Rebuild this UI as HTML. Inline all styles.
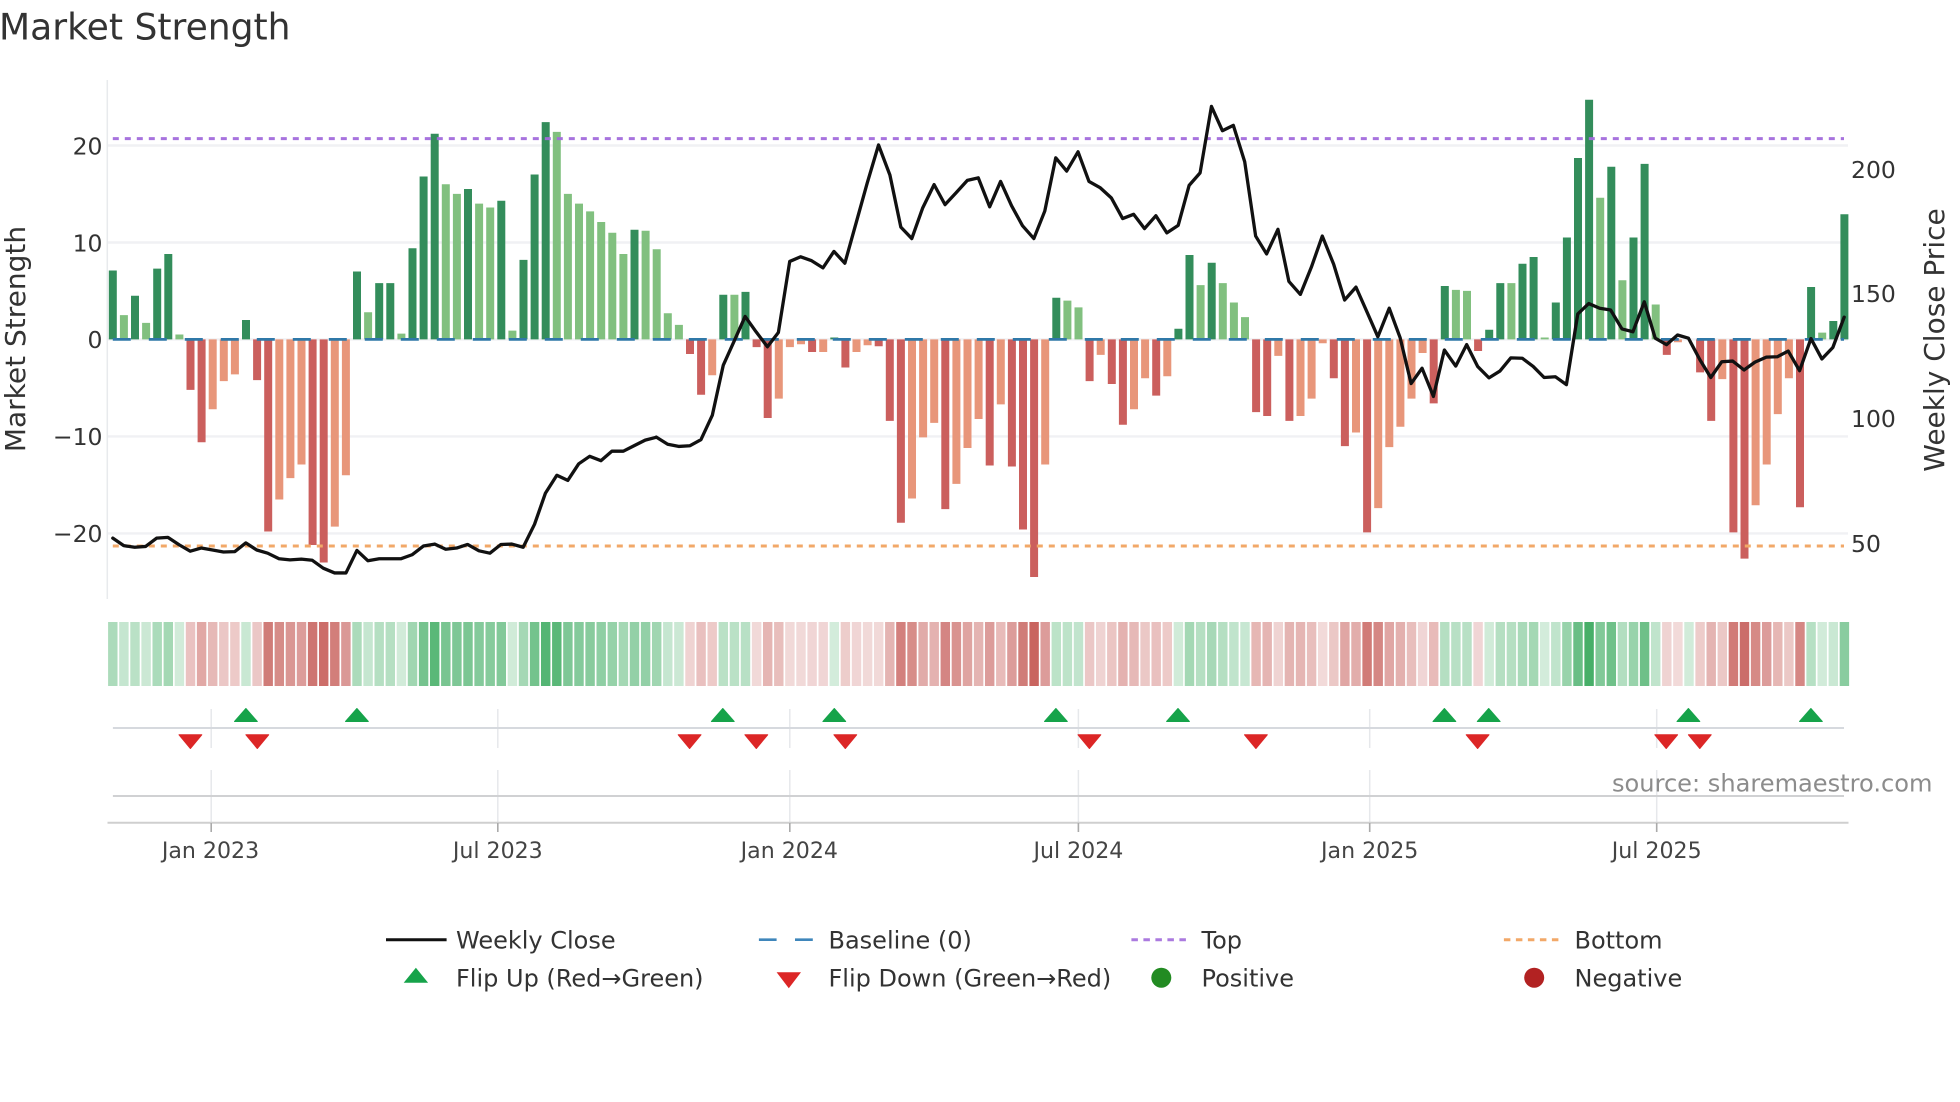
<!DOCTYPE html>
<html lang="en">
<head>
<meta charset="utf-8">
<title>Market Strength</title>
<style>
html,body{margin:0;padding:0;background:#fff;width:1960px;height:1102px;overflow:hidden}
svg{display:block}
text{font-family:"DejaVu Sans","Liberation Sans",sans-serif}
.t{font-size:23.5px;fill:#333}
.d{font-size:22.1px;fill:#444;text-anchor:middle}
.l{font-size:24px;fill:#333}
.ln{fill:none;stroke:#111;stroke-width:3.3;stroke-linejoin:round;stroke-linecap:round;vector-effect:non-scaling-stroke}
</style>
</head>
<body>
<svg width="1960" height="1102" viewBox="0 0 1960 1102" xmlns="http://www.w3.org/2000/svg">
<rect width="1960" height="1102" fill="#fff"/>

<text x="-1" y="39.5" font-size="36.1" fill="#333">Market Strength</text>

<!-- gridlines -->
<g stroke="#f0f1f4" stroke-width="2.4" fill="none">
<path d="M107 145.5H1848M107 242.5H1848M107 339.4H1848M107 436.4H1848M107 533.4H1848"/>
</g>
<path d="M107.3 80V599" stroke="#e8eaed" stroke-width="1.5"/>

<!-- bars -->
<g transform="translate(112.8,339.4) scale(11.1,-9.7)" fill="none" stroke-width=".72">
<path stroke="#338d5b" d="M0 0V7.1M2 0V4.5M4 0V7.3M5 0V8.8M12 0V2M22 0V7M24 0V5.8M25 0V5.8M27 0V9.4M28 0V16.8M29 0V21.2M32 0V15.5M35 0V14.3M37 0V8.2M38 0V17M39 0V22.4M47 0V11.3M55 0V4.6M57 0V4.9M65 0V.2M85 0V4.3M96 0V1.1M97 0V8.7M99 0V7.9M120 0V5.5M124 0V1M125 0V5.8M127 0V7.8M128 0V8.5M130 0V3.8M131 0V10.5M132 0V18.7M133 0V24.7M135 0V17.8M137 0V10.5M138 0V18.1M153 0V5.4M155 0V1.9M156 0V12.9"/>
<path stroke="#81c07f" d="M1 0V2.5M3 0V1.7M6 0V.5M23 0V2.8M26 0V.6M30 0V16M31 0V15M33 0V14M34 0V13.6M36 0V.9M40 0V21.4M41 0V15M42 0V14M43 0V13.2M44 0V12.1M45 0V11M46 0V8.8M48 0V11.2M49 0V9.3M50 0V2.7M51 0V1.5M56 0V4.6M86 0V4M87 0V3.3M98 0V5.6M100 0V5.8M101 0V3.8M102 0V2.3M121 0V5.1M122 0V5M126 0V5.8M129 0V.2M134 0V14.6M136 0V6.1M139 0V3.6M154 0V.7"/>
<path stroke="#cb5f5d" d="M7 0V-5.2M8 0V-10.6M13 0V-4.2M14 0V-19.8M18 0V-21.2M19 0V-23M52 0V-1.5M53 0V-5.7M58 0V-.8M59 0V-8.1M63 0V-1.3M66 0V-2.9M69 0V-.7M70 0V-8.4M71 0V-18.9M75 0V-17.5M79 0V-13M81 0V-13.1M82 0V-19.6M83 0V-24.5M88 0V-4.3M90 0V-4.6M91 0V-8.8M94 0V-5.8M103 0V-7.5M104 0V-7.9M106 0V-8.4M110 0V-4M111 0V-11M113 0V-19.9M119 0V-6.6M123 0V-1.2M140 0V-1.6M143 0V-3.4M144 0V-8.4M146 0V-19.9M147 0V-22.6M152 0V-17.3"/>
<path stroke="#e8967a" d="M9 0V-7.2M10 0V-4.3M11 0V-3.6M15 0V-16.5M16 0V-14.3M17 0V-12.9M20 0V-19.3M21 0V-14M54 0V-3.7M60 0V-6.1M61 0V-.8M62 0V-.5M64 0V-1.3M67 0V-1.3M68 0V-.6M72 0V-16.4M73 0V-10.1M74 0V-8.6M76 0V-14.9M77 0V-11.2M78 0V-8.2M80 0V-6.7M84 0V-12.9M89 0V-1.6M92 0V-7.2M93 0V-4M95 0V-3.8M105 0V-1.7M107 0V-7.9M108 0V-6.1M109 0V-.4M112 0V-9.6M114 0V-17.4M115 0V-11.1M116 0V-9M117 0V-6.1M118 0V-1.4M141 0V-.3M145 0V-4.1M148 0V-17.1M149 0V-12.9M150 0V-7.7M151 0V-4"/>
</g>

<!-- baseline / top / bottom -->
<path d="M112.8 339.4H1844" stroke="#2f78a8" stroke-width="2.8" stroke-dasharray="18 18" fill="none"/>
<path d="M112.8 138.6H1844" stroke="#a26bdc" stroke-width="3" stroke-dasharray="6 6" fill="none" opacity=".95"/>
<path d="M112.8 546H1844" stroke="#f2a868" stroke-width="3" stroke-dasharray="6 6" fill="none"/>

<!-- weekly close line -->
<polyline class="ln" transform="scale(.42088,.39541)" points="268,1361 294,1380 320,1384 346,1382 372,1361 399,1359 426,1378 452,1394 478,1386 505,1391 531,1396 558,1395 584,1373 610,1391 636,1399 663,1413 689,1416 716,1414 742,1417 768,1437 795,1449 822,1449 848,1392 874,1418 901,1413 927,1413 953,1413 979,1403 1006,1381 1033,1376 1059,1389 1085,1386 1111,1377 1138,1393 1164,1399 1190,1377 1216,1376 1243,1384 1270,1326 1296,1247 1323,1202 1349,1215 1375,1173 1401,1154 1428,1165 1454,1141 1481,1141 1507,1127 1533,1113 1559,1106"/>
<polyline class="ln" transform="translate(650,60) scale(.42088,.35714)" points="15,1056 42,1076 68,1082 95,1080 121,1063 148,995 174,855 200,787 226,718 252,761 279,803 305,763 332,564 358,551 384,562 411,582 437,536 463,569 490,455 516,345 543,238 570,322 596,468 622,500 648,414 675,349 701,405 727,372 754,337 780,330 807,411 833,340 859,408 885,464 912,500 938,423 964,274 990,311 1017,257 1043,340 1070,358 1096,386 1123,444 1149,432 1175,472 1202,436 1228,484 1255,463 1281,351 1307,316 1334,130 1360,198 1386,183 1413,285 1439,493 1465,543 1492,474 1518,620 1545,656"/>
<polyline class="ln" transform="translate(1300,60) scale(.42088,.35714)" points="1,656 27,580 53,493 80,572 106,672 133,636 159,705 185,775 212,695 238,778 264,906 290,863 317,942 343,812 370,857 396,797 422,858 449,890 475,871 501,834 528,835 554,858 580,889 607,887 633,909 660,711 686,682 712,695 738,700 765,753 791,761 818,677 844,779 871,797 897,770 923,779 950,839 976,889 1002,845 1028,843 1055,868 1081,846 1108,832 1134,831 1160,815 1187,870 1214,780 1240,837 1266,805 1293,720"/>

<!-- y ticks -->
<g text-anchor="end">
<text class="t" x="102.5" y="154.5">20</text>
<text class="t" x="102.5" y="251.5">10</text>
<text class="t" x="102.5" y="348">0</text>
<text class="t" x="102.5" y="445">−10</text>
<text class="t" x="102.5" y="542">−20</text>
</g>
<text class="t" x="1851" y="178">200</text>
<text class="t" x="1851" y="302">150</text>
<text class="t" x="1851" y="427">100</text>
<text class="t" x="1851" y="552">50</text>
<text transform="translate(25,339) rotate(-90)" text-anchor="middle" font-size="28" fill="#333">Market Strength</text>
<text transform="translate(1944,340) rotate(-90)" text-anchor="middle" font-size="28" fill="#333">Weekly Close Price</text>

<!-- heat strip -->
<g transform="translate(112.8,0) scale(11.1,1)" fill="none" stroke-width=".85" opacity=".87">
<g stroke="#23a04b">
<path d="M0 622v64" opacity=".43"/><path d="M1 622v64" opacity=".30"/><path d="M2 622v64" opacity=".36"/><path d="M3 622v64" opacity=".27"/><path d="M4 622v64" opacity=".44"/><path d="M5 622v64" opacity=".48"/><path d="M6 622v64" opacity=".24"/><path d="M12 622v64" opacity=".28"/><path d="M22 622v64" opacity=".43"/><path d="M23 622v64" opacity=".30"/><path d="M24 622v64" opacity=".39"/><path d="M25 622v64" opacity=".39"/><path d="M26 622v64" opacity=".24"/><path d="M27 622v64" opacity=".50"/><path d="M28 622v64" opacity=".72"/><path d="M29 622v64" opacity=".86"/><path d="M30 622v64" opacity=".70"/><path d="M31 622v64" opacity=".67"/><path d="M32 622v64" opacity=".69"/><path d="M33 622v64" opacity=".64"/><path d="M34 622v64" opacity=".63"/><path d="M35 622v64" opacity=".65"/><path d="M36 622v64" opacity=".25"/><path d="M37 622v64" opacity=".47"/><path d="M38 622v64" opacity=".73"/><path d="M39 622v64" opacity=".89"/><path d="M40 622v64" opacity=".86"/><path d="M41 622v64" opacity=".67"/><path d="M42 622v64" opacity=".64"/><path d="M43 622v64" opacity=".62"/><path d="M44 622v64" opacity=".58"/><path d="M45 622v64" opacity=".55"/><path d="M46 622v64" opacity=".48"/><path d="M47 622v64" opacity=".56"/><path d="M48 622v64" opacity=".56"/><path d="M49 622v64" opacity=".50"/><path d="M50 622v64" opacity=".30"/><path d="M51 622v64" opacity=".27"/><path d="M55 622v64" opacity=".36"/><path d="M56 622v64" opacity=".36"/><path d="M57 622v64" opacity=".37"/><path d="M65 622v64" opacity=".23"/><path d="M85 622v64" opacity=".35"/><path d="M86 622v64" opacity=".34"/><path d="M87 622v64" opacity=".32"/><path d="M96 622v64" opacity=".25"/><path d="M97 622v64" opacity=".48"/><path d="M98 622v64" opacity=".39"/><path d="M99 622v64" opacity=".46"/><path d="M100 622v64" opacity=".39"/><path d="M101 622v64" opacity=".33"/><path d="M102 622v64" opacity=".29"/><path d="M120 622v64" opacity=".39"/><path d="M121 622v64" opacity=".37"/><path d="M122 622v64" opacity=".37"/><path d="M124 622v64" opacity=".25"/><path d="M125 622v64" opacity=".39"/><path d="M126 622v64" opacity=".39"/><path d="M127 622v64" opacity=".45"/><path d="M128 622v64" opacity=".48"/><path d="M129 622v64" opacity=".23"/><path d="M130 622v64" opacity=".33"/><path d="M131 622v64" opacity=".54"/><path d="M132 622v64" opacity=".78"/><path d="M133 622v64" opacity=".96"/><path d="M134 622v64" opacity=".66"/><path d="M135 622v64" opacity=".75"/><path d="M136 622v64" opacity=".40"/><path d="M137 622v64" opacity=".54"/><path d="M138 622v64" opacity=".76"/><path d="M139 622v64" opacity=".33"/><path d="M142 622v64" opacity=".24"/><path d="M153 622v64" opacity=".38"/><path d="M154 622v64" opacity=".24"/><path d="M155 622v64" opacity=".28"/><path d="M156 622v64" opacity=".61"/>
</g>
<g stroke="#be4641">
<path d="M7 622v64" opacity=".38"/><path d="M8 622v64" opacity=".54"/><path d="M9 622v64" opacity=".44"/><path d="M10 622v64" opacity=".35"/><path d="M11 622v64" opacity=".33"/><path d="M13 622v64" opacity=".35"/><path d="M14 622v64" opacity=".81"/><path d="M15 622v64" opacity=".72"/><path d="M16 622v64" opacity=".65"/><path d="M17 622v64" opacity=".61"/><path d="M18 622v64" opacity=".86"/><path d="M19 622v64" opacity=".91"/><path d="M20 622v64" opacity=".80"/><path d="M21 622v64" opacity=".64"/><path d="M52 622v64" opacity=".27"/><path d="M53 622v64" opacity=".39"/><path d="M54 622v64" opacity=".33"/><path d="M58 622v64" opacity=".24"/><path d="M59 622v64" opacity=".46"/><path d="M60 622v64" opacity=".40"/><path d="M61 622v64" opacity=".24"/><path d="M62 622v64" opacity=".24"/><path d="M63 622v64" opacity=".26"/><path d="M64 622v64" opacity=".26"/><path d="M66 622v64" opacity=".31"/><path d="M67 622v64" opacity=".26"/><path d="M68 622v64" opacity=".24"/><path d="M69 622v64" opacity=".24"/><path d="M70 622v64" opacity=".47"/><path d="M71 622v64" opacity=".79"/><path d="M72 622v64" opacity=".71"/><path d="M73 622v64" opacity=".52"/><path d="M74 622v64" opacity=".48"/><path d="M75 622v64" opacity=".75"/><path d="M76 622v64" opacity=".67"/><path d="M77 622v64" opacity=".56"/><path d="M78 622v64" opacity=".47"/><path d="M79 622v64" opacity=".61"/><path d="M80 622v64" opacity=".42"/><path d="M81 622v64" opacity=".61"/><path d="M82 622v64" opacity=".81"/><path d="M83 622v64" opacity=".96"/><path d="M84 622v64" opacity=".61"/><path d="M88 622v64" opacity=".35"/><path d="M89 622v64" opacity=".27"/><path d="M90 622v64" opacity=".36"/><path d="M91 622v64" opacity=".48"/><path d="M92 622v64" opacity=".44"/><path d="M93 622v64" opacity=".34"/><path d="M94 622v64" opacity=".39"/><path d="M95 622v64" opacity=".33"/><path d="M103 622v64" opacity=".45"/><path d="M104 622v64" opacity=".46"/><path d="M105 622v64" opacity=".27"/><path d="M106 622v64" opacity=".47"/><path d="M107 622v64" opacity=".46"/><path d="M108 622v64" opacity=".40"/><path d="M109 622v64" opacity=".23"/><path d="M110 622v64" opacity=".34"/><path d="M111 622v64" opacity=".55"/><path d="M112 622v64" opacity=".51"/><path d="M113 622v64" opacity=".82"/><path d="M114 622v64" opacity=".74"/><path d="M115 622v64" opacity=".55"/><path d="M116 622v64" opacity=".49"/><path d="M117 622v64" opacity=".40"/><path d="M118 622v64" opacity=".26"/><path d="M119 622v64" opacity=".42"/><path d="M123 622v64" opacity=".26"/><path d="M140 622v64" opacity=".27"/><path d="M141 622v64" opacity=".23"/><path d="M143 622v64" opacity=".32"/><path d="M144 622v64" opacity=".47"/><path d="M145 622v64" opacity=".34"/><path d="M146 622v64" opacity=".82"/><path d="M147 622v64" opacity=".90"/><path d="M148 622v64" opacity=".73"/><path d="M149 622v64" opacity=".61"/><path d="M150 622v64" opacity=".45"/><path d="M151 622v64" opacity=".34"/><path d="M152 622v64" opacity=".74"/>
</g>
</g>

<!-- lower panel grid -->
<g stroke="#e6e8eb" stroke-width="1.5" fill="none">
<path d="M211.2 709V748M211.2 770V822M497.8 709V748M497.8 770V822M789.8 709V748M789.8 770V822M1078.4 709V748M1078.4 770V822M1369.7 709V748M1369.7 770V822M1656.7 709V748M1656.7 770V822"/>
</g>
<path d="M112.9 728H1844" stroke="#d6d9de" stroke-width="2" fill="none"/>
<path d="M112.9 796H1844" stroke="#d0d1d3" stroke-width="2" fill="none"/>
<path d="M107.5 822.7H1848.5" stroke="#cfcfcf" stroke-width="2" fill="none"/>
<path d="M211.2 823V832M497.8 823V832M789.8 823V832M1078.4 823V832M1369.7 823V832M1656.7 823V832" stroke="#aaa" stroke-width="1.6" fill="none"/>

<!-- flip up triangles -->
<g fill="#16a34a" stroke="#16a34a" stroke-width="1" stroke-linejoin="round">
<path d="M245.9 708.5L257.3 721.5H234.5Z"/>
<path d="M356.9 708.5L368.3 721.5H345.5Z"/>
<path d="M722.8 708.5L734.2 721.5H711.4Z"/>
<path d="M834.3 708.5L845.7 721.5H822.9Z"/>
<path d="M1055.9 708.5L1067.3 721.5H1044.5Z"/>
<path d="M1178 708.5L1189.4 721.5H1166.6Z"/>
<path d="M1444.4 708.5L1455.8 721.5H1433Z"/>
<path d="M1488.7 708.5L1500.1 721.5H1477.3Z"/>
<path d="M1688.4 708.5L1699.8 721.5H1677Z"/>
<path d="M1810.9 708.5L1822.3 721.5H1799.5Z"/>
</g>
<!-- flip down triangles -->
<g fill="#dc2626" stroke="#dc2626" stroke-width="1" stroke-linejoin="round">
<path d="M190.4 748.5L179 734.8H201.8Z"/>
<path d="M257.3 748.5L245.9 734.8H268.7Z"/>
<path d="M689.6 748.5L678.2 734.8H701Z"/>
<path d="M756.3 748.5L744.9 734.8H767.7Z"/>
<path d="M845.3 748.5L833.9 734.8H856.7Z"/>
<path d="M1089.4 748.5L1078 734.8H1100.8Z"/>
<path d="M1255.9 748.5L1244.5 734.8H1267.3Z"/>
<path d="M1477.6 748.5L1466.2 734.8H1489Z"/>
<path d="M1666.2 748.5L1654.8 734.8H1677.6Z"/>
<path d="M1699.8 748.5L1688.4 734.8H1711.2Z"/>
</g>

<text x="1612" y="791.7" font-size="24.1" fill="#8c8c8c">source: sharemaestro.com</text>

<!-- date labels -->
<text class="d" x="210.5" y="858">Jan 2023</text>
<text class="d" x="497.8" y="858">Jul 2023</text>
<text class="d" x="789.3" y="858">Jan 2024</text>
<text class="d" x="1078.4" y="858">Jul 2024</text>
<text class="d" x="1369.7" y="858">Jan 2025</text>
<text class="d" x="1656.7" y="858">Jul 2025</text>

<!-- legend -->
<path d="M386 939.7H446.6" stroke="#111" stroke-width="3" fill="none"/>
<text class="l" x="456" y="948.3">Weekly Close</text>
<path d="M758.9 939.7H776.6M795 939.7H812.8" stroke="#3f86bb" stroke-width="2.6" fill="none"/>
<text class="l" x="828.5" y="948.3">Baseline (0)</text>
<path d="M1131.4 939.7H1186" stroke="#a26bdc" stroke-width="3" stroke-dasharray="6.5 5.5" fill="none" opacity=".9"/>
<text class="l" x="1201.5" y="948.3">Top</text>
<path d="M1503.9 939.7H1558.6" stroke="#f2a868" stroke-width="3" stroke-dasharray="6.5 5.5" fill="none"/>
<text class="l" x="1574.5" y="948.3">Bottom</text>

<path d="M415.9 967.7L428.1 982.7H403.7Z" fill="#16a34a"/>
<text class="l" x="456" y="986.7">Flip Up (Red→Green)</text>
<path d="M788.8 988.3L776.6 972.3H801Z" fill="#dc2626"/>
<text class="l" x="828.5" y="986.7">Flip Down (Green→Red)</text>
<circle cx="1161.3" cy="977.7" r="10" fill="#228b22"/>
<text class="l" x="1201.5" y="986.7">Positive</text>
<circle cx="1534.2" cy="977.7" r="10" fill="#b22222"/>
<text class="l" x="1574.5" y="986.7">Negative</text>
</svg>
</body>
</html>
